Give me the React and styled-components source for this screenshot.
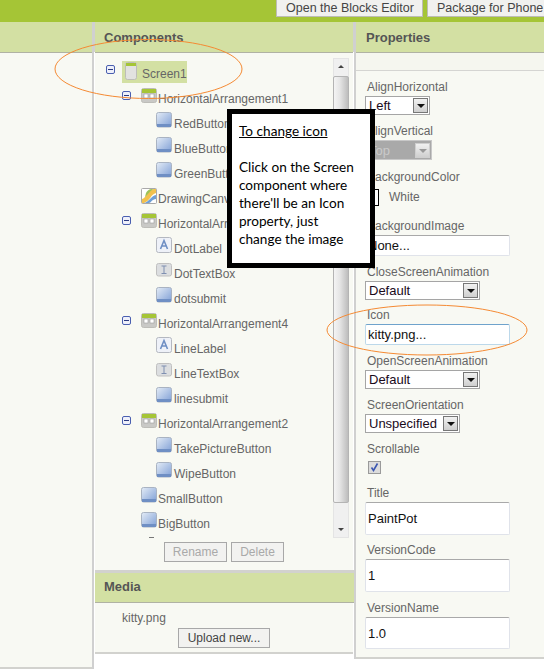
import React from "react";
import styled, { createGlobalStyle } from "styled-components";

const GlobalStyle = createGlobalStyle`
  html, body {
    margin: 0;
    padding: 0;
    background: #fff;
  }
  body {
    font-family: "Liberation Sans", Arial, sans-serif;
    font-size: 12px;
  }
`;

const Page = styled.div`
  position: relative;
  width: 544px;
  height: 671px;
  overflow: hidden;
  background: #fff;
`;

const TopBar = styled.div`
  display: flex;
  justify-content: flex-end;
  gap: 4px;
  height: 22px;
  background: #a5c536;
`;

const TopButton = styled.div`
  box-sizing: border-box;
  width: ${(p) => p.$width}px;
  height: 17px;
  padding-left: 9px;
  background: #f1f1ef;
  border: 1px solid #bdbdb5;
  border-top: 0;
  border-right: ${(p) => (p.$last ? "0" : "1px solid #bdbdb5")};
  color: #444;
  font-size: 12.5px;
  line-height: 16px;
  white-space: nowrap;
  overflow: hidden;
`;

const Columns = styled.div`
  display: flex;
  align-items: flex-start;
`;

const PanelHeader = styled.div`
  box-sizing: border-box;
  height: 31px;
  padding: 8px 0 0 ${(p) => p.$pad || 0}px;
  background: #d3e0a3;
  border-bottom: 1px solid #b0b2a4;
  color: #555;
  font-size: 13px;
  font-weight: bold;
  line-height: 16px;
`;

const ViewerColumn = styled.div`
  box-sizing: border-box;
  width: 92px;
  height: 647px;
  background: #f8f9f3;
  border-bottom: 2px solid #d2d2ce;
`;

const Gutter = styled.div`
  flex: none;
  width: 3px;
  height: 647px;
  background: linear-gradient(#d0d0d0, #d0d0d0) no-repeat 0 0 / 3px 30px,
    linear-gradient(#d0d0d0, #d0d0d0) no-repeat 0 30px / 2px 100%;
`;

const ComponentsColumn = styled.div`
  box-sizing: border-box;
  flex: none;
  width: 258px;
  height: 632px;
  background: #f8f9f3;
  border-bottom: 2px solid #d2d2ce;
`;

const TreeArea = styled.div`
  display: flex;
  height: 486px;
`;

const Tree = styled.div`
  box-sizing: border-box;
  width: 238px;
  height: 486px;
  padding-top: 8px;
  overflow: hidden;
`;

const Row = styled.div`
  display: flex;
  align-items: flex-start;
  height: 25px;
  padding-left: ${(p) => p.$pad}px;
  color: #666;
  line-height: 27px;
  white-space: nowrap;
`;

const Toggle = styled.span`
  flex: none;
  position: relative;
  box-sizing: border-box;
  width: 9px;
  height: 9px;
  margin-top: ${(p) => p.$top}px;
  margin-right: 10px;
  border: 1px solid #4a5fb0;
  border-radius: 2px;
  background: #eef0fa;
  &::after {
    content: "";
    position: absolute;
    left: 1px;
    right: 1px;
    top: 3px;
    height: 1px;
    background: #2b3a80;
  }
`;

const Spacer = styled.span`
  flex: none;
  width: 19px;
`;

const Selected = styled.span`
  display: flex;
  align-items: flex-start;
  box-sizing: border-box;
  width: 65px;
  height: 22px;
  margin-left: -3px;
  padding-left: 3px;
  background: #d3e0a3;
`;

const Label = styled.span`
  margin-left: ${(p) => p.$gap}px;
`;

const IconWrap = styled.svg`
  flex: none;
  display: block;
  margin-top: ${(p) => p.$top}px;
`;

const Clipped = styled.div`
  width: 5px;
  height: 1px;
  margin: 1px 0 0 54px;
  background: #777;
`;

const Scrollbar = styled.div`
  position: relative;
  box-sizing: border-box;
  width: 16px;
  height: 480px;
  margin-top: 5px;
  background: #f0f0f0;
  border: 1px solid #e4e4e4;
`;

const ArrowUp = styled.span`
  position: absolute;
  left: 4px;
  top: 6px;
  border-left: 3px solid transparent;
  border-right: 3px solid transparent;
  border-bottom: 3px solid #444;
`;

const ArrowDown = styled.span`
  position: absolute;
  left: 4px;
  bottom: 6px;
  border-left: 3px solid transparent;
  border-right: 3px solid transparent;
  border-top: 3px solid #444;
`;

const Thumb = styled.span`
  position: absolute;
  left: -1px;
  top: 17px;
  box-sizing: border-box;
  width: 16px;
  height: 427px;
  background: linear-gradient(90deg, #f4f4f4, #e6e6e6 40%, #bdbdbd);
  border: 1px solid #b4b4b4;
  border-radius: 2px;
`;

const ActionRow = styled.div`
  display: flex;
  gap: 4px;
  height: 34px;
  padding: 3px 0 0 69px;
  box-sizing: border-box;
`;

const Action = styled.div`
  box-sizing: border-box;
  width: ${(p) => p.$width}px;
  height: 20px;
  background: #f2f2f0;
  border: 1px solid #a8a8a8;
  color: ${(p) => (p.$disabled ? "#a9a9a9" : "#444")};
  font-size: 12px;
  line-height: 18px;
  text-align: center;
`;

const MediaHeader = styled(PanelHeader)`
  height: 30px;
  padding: 6px 0 0 9px;
  margin: 0 -1px 0 0;
  box-shadow: 0 -3px 0 #d2d2ce;
`;

const MediaBody = styled.div`
  display: flex;
  flex-direction: column;
  padding: 8px 0 0 27px;
  color: #666;
  line-height: 15px;
`;

const UploadRow = styled.div`
  padding: 2px 0 0 56px;
`;

const PropertiesColumn = styled.div`
  flex: 1;
  box-sizing: border-box;
  height: 637px;
  background: #f8f9f3;
  border-bottom: 2px solid #d2d2ce;
`;

const SideGutter = styled(Gutter)`
  height: 637px;
  background: linear-gradient(#d0d0d0, #d0d0d0) no-repeat 0 0 / 3px 30px,
    linear-gradient(#d0d0d0, #d0d0d0) no-repeat 1px 30px / 2px 100%;
`;

const SubBand = styled.div`
  height: 17px;
  background: #f5f6ef;
  border-bottom: 1px solid #d5d5d2;
`;

const PropList = styled.div`
  padding: 9px 0 0 9px;
`;

const Field = styled.div`
  margin-top: ${(p) => p.$gap || 0}px;
`;

const PropLabel = styled.div`
  height: 16px;
  padding-left: 2px;
  color: #666;
  line-height: 15px;
  white-space: nowrap;
`;

const SelectBox = styled.div`
  box-sizing: border-box;
  display: flex;
  align-items: center;
  justify-content: space-between;
  width: ${(p) => p.$width}px;
  height: ${(p) => (p.$disabled ? 20 : 19)}px;
  padding: 0 1px 0 3px;
  background: ${(p) => (p.$disabled ? "#a9a9a9" : "#fff")};
  border: 1px solid ${(p) => (p.$disabled ? "#c8c8c8" : "#a5a5a5")};
  color: ${(p) => (p.$disabled ? "#c9c9c9" : "#1a0a1a")};
  font-size: 13px;
`;

const SelectArrow = styled.span`
  position: relative;
  box-sizing: border-box;
  width: 15px;
  height: 15px;
  background: linear-gradient(#f1f1f1, #cfcfcf);
  border: 1px solid ${(p) => (p.$disabled ? "#cfcfcf" : "#777")};
  &::after {
    content: "";
    position: absolute;
    left: 3px;
    top: 5px;
    border-left: 4px solid transparent;
    border-right: 4px solid transparent;
    border-top: 4px solid ${(p) => (p.$disabled ? "#999" : "#111")};
  }
`;

const TextBox = styled.input`
  display: block;
  box-sizing: border-box;
  width: 145px;
  height: ${(p) => p.$height}px;
  padding: 0 2px;
  margin: 0;
  font-family: "Liberation Sans", Arial, sans-serif;
  font-size: 13px;
  color: #111;
  background: #fff;
  outline: none;
  border: 1px solid ${(p) => (p.$focus ? "#bcd8ea" : "#e0e3ea")};
  border-top-color: ${(p) => (p.$focus ? "#6fa3cc" : "#a9a9a9")};
  border-radius: 2px;
`;

const ColorRow = styled.div`
  display: flex;
  align-items: center;
  height: 22px;
  padding-left: 2px;
  color: #666;
`;

const Swatch = styled.span`
  box-sizing: border-box;
  width: 12px;
  height: 17px;
  margin-right: 10px;
  background: #fff;
  border: 1px solid #000;
`;

const Check = styled.span`
  display: block;
  box-sizing: border-box;
  width: 13px;
  height: 13px;
  margin: 3px 0 0 3px;
  background: #dcdcdc;
  border: 1px solid #9a9a9a;
`;

const Callout = styled.div`
  position: absolute;
  left: 227px;
  top: 109px;
  box-sizing: border-box;
  width: 148px;
  height: 159px;
  padding: 8px 0 0 7px;
  background: #fff;
  border: 5px solid #000;
  color: #000;
  font-family: Lato, "Open Sans", sans-serif;
  font-size: 13.6px;
  line-height: 18px;
`;

const CalloutTitle = styled.div`
  text-decoration: underline;
  margin-bottom: 18px;
`;

const Rings = styled.svg`
  position: absolute;
  left: 0;
  top: 0;
  pointer-events: none;
`;

const ScreenIcon = () => (
  <IconWrap $top={1} width="13" height="19" viewBox="0 0 13 19">
    <rect x="0.5" y="0.5" width="11" height="17" rx="2" fill="#e2e2e0" stroke="#bdbdb8" />
    <rect x="1" y="1" width="10" height="3" fill="#a5c536" />
  </IconWrap>
);

const ArrangementIcon = () => (
  <IconWrap $top={2} width="16" height="16" viewBox="0 0 16 16">
    <rect x="0.5" y="0.5" width="15" height="14" rx="2" fill="#c9c9c6" stroke="#bdbdb8" />
    <rect x="1" y="1" width="14" height="4" fill="#a5c536" />
    <rect x="3" y="6" width="4" height="4" fill="#fff" stroke="#9a9a9a" strokeWidth="0.6" />
    <rect x="9" y="6" width="4" height="4" fill="#fff" stroke="#9a9a9a" strokeWidth="0.6" />
  </IconWrap>
);

const ButtonIcon = () => (
  <IconWrap $top={1} width="16" height="16" viewBox="0 0 16 16">
    <defs>
      <linearGradient id="btn" x1="0" y1="0" x2="1" y2="1">
        <stop offset="0" stopColor="#e4ecf6" />
        <stop offset="1" stopColor="#7f9fd6" />
      </linearGradient>
    </defs>
    <rect x="0.5" y="0.5" width="15" height="14.5" rx="2" fill="url(#btn)" stroke="#a9b3c2" />
    <rect x="1" y="12" width="14" height="3" fill="#6f8fc4" />
  </IconWrap>
);

const LabelIcon = () => (
  <IconWrap $top={1} width="16" height="16" viewBox="0 0 16 16">
    <rect x="0.5" y="0.5" width="15" height="15" rx="2" fill="#eef1f8" stroke="#b4b8c0" />
    <path d="M4.5 12 L8 3.5 L11.5 12 M6 9 H10" fill="none" stroke="#6f8fc4" strokeWidth="1.6" />
  </IconWrap>
);

const TextBoxIcon = () => (
  <IconWrap $top={2} width="16" height="14" viewBox="0 0 16 14">
    <rect x="0.5" y="0.5" width="15" height="12.5" rx="2" fill="#dcdee0" stroke="#c0c0c0" />
    <path d="M5.5 3 H10.5 M8 3 V10.5 M5.5 10.5 H10.5" fill="none" stroke="#7f8fb0" strokeWidth="1" />
  </IconWrap>
);

const CanvasIcon = () => (
  <IconWrap $top={2} width="16" height="16" viewBox="0 0 16 16">
    <rect x="0.5" y="0.5" width="15" height="15" rx="1" fill="#fff" stroke="#a9a9a9" />
    <path d="M1 11 C5 11 6 2 13 1 H15 V5 C10 6 9 13 3 15 H1 Z" fill="#f2c14e" />
    <path d="M3 15 C8 14 10 8 15 7 V11 C11 11 10 15 8 15 Z" fill="#6f9fd6" />
    <path d="M5 5 C6 3 8 1 11 1 H13 C9 2 7 7 4 9 Z" fill="#9cc25a" />
  </IconWrap>
);

const icons = {
  arrangement: ArrangementIcon,
  button: ButtonIcon,
  label: LabelIcon,
  textbox: TextBoxIcon,
  canvas: CanvasIcon,
};

const rows = [
  { name: "HorizontalArrangement1", icon: "arrangement", depth: 1, toggle: true },
  { name: "RedButton", icon: "button", depth: 2 },
  { name: "BlueButton", icon: "button", depth: 2 },
  { name: "GreenButton", icon: "button", depth: 2 },
  { name: "DrawingCanvas", icon: "canvas", depth: 1 },
  { name: "HorizontalArrangement3", icon: "arrangement", depth: 1, toggle: true },
  { name: "DotLabel", icon: "label", depth: 2 },
  { name: "DotTextBox", icon: "textbox", depth: 2 },
  { name: "dotsubmit", icon: "button", depth: 2 },
  { name: "HorizontalArrangement4", icon: "arrangement", depth: 1, toggle: true },
  { name: "LineLabel", icon: "label", depth: 2 },
  { name: "LineTextBox", icon: "textbox", depth: 2 },
  { name: "linesubmit", icon: "button", depth: 2 },
  { name: "HorizontalArrangement2", icon: "arrangement", depth: 1, toggle: true },
  { name: "TakePictureButton", icon: "button", depth: 2 },
  { name: "WipeButton", icon: "button", depth: 2 },
  { name: "SmallButton", icon: "button", depth: 1 },
  { name: "BigButton", icon: "button", depth: 1 },
];

const padFor = { 0: 11, 1: 27, 2: 42 };

const Select = ({ value, width, disabled }) => (
  <SelectBox $width={width} $disabled={disabled}>
    <span>{value}</span>
    <SelectArrow $disabled={disabled} />
  </SelectBox>
);

const App = () => {
  return (
    <Page>
      <GlobalStyle />
      <TopBar>
        <TopButton $width={147}>Open the Blocks Editor</TopButton>
        <TopButton $width={117} $last>Package for Phone</TopButton>
      </TopBar>
      <Columns>
        <ViewerColumn>
          <PanelHeader />
        </ViewerColumn>
        <Gutter />
        <ComponentsColumn>
          <PanelHeader $pad={9}>Components</PanelHeader>
          <TreeArea>
            <Tree>
              <Row $pad={padFor[0]}>
                <Toggle $top={4} />
                <Selected>
                  <ScreenIcon />
                  <Label $gap={4}>Screen1</Label>
                </Selected>
              </Row>
              {rows.map((row) => {
                const RowIcon = icons[row.icon];
                return (
                  <Row key={row.name} $pad={padFor[row.depth]}>
                    {row.toggle ? <Toggle $top={5} /> : <Spacer />}
                    <RowIcon />
                    <Label $gap={row.depth === 2 ? 2 : 1}>{row.name}</Label>
                  </Row>
                );
              })}
              <Clipped />
            </Tree>
            <Scrollbar>
              <ArrowUp />
              <Thumb />
              <ArrowDown />
            </Scrollbar>
          </TreeArea>
          <ActionRow>
            <Action $width={63} $disabled>Rename</Action>
            <Action $width={53} $disabled>Delete</Action>
          </ActionRow>
          <MediaHeader>Media</MediaHeader>
          <MediaBody>
            <span>kitty.png</span>
            <UploadRow>
              <Action $width={92}>Upload new...</Action>
            </UploadRow>
          </MediaBody>
        </ComponentsColumn>
        <SideGutter />
        <PropertiesColumn>
          <PanelHeader $pad={10}>Properties</PanelHeader>
          <SubBand />
          <PropList>
            <Field>
              <PropLabel>AlignHorizontal</PropLabel>
              <Select value="Left" width={65} />
            </Field>
            <Field $gap={9}>
              <PropLabel>AlignVertical</PropLabel>
              <Select value="Top" width={67} disabled />
            </Field>
            <Field $gap={10}>
              <PropLabel>BackgroundColor</PropLabel>
              <ColorRow>
                <Swatch />
                White
              </ColorRow>
            </Field>
            <Field $gap={11}>
              <PropLabel>BackgroundImage</PropLabel>
              <TextBox $height={21} readOnly value="None..." />
            </Field>
            <Field $gap={9}>
              <PropLabel>CloseScreenAnimation</PropLabel>
              <Select value="Default" width={115} />
            </Field>
            <Field $gap={8}>
              <PropLabel>Icon</PropLabel>
              <TextBox $height={21} $focus readOnly value="kitty.png..." />
            </Field>
            <Field $gap={9}>
              <PropLabel>OpenScreenAnimation</PropLabel>
              <Select value="Default" width={115} />
            </Field>
            <Field $gap={9}>
              <PropLabel>ScreenOrientation</PropLabel>
              <Select value="Unspecified" width={95} />
            </Field>
            <Field $gap={9}>
              <PropLabel>Scrollable</PropLabel>
              <Check>
                <svg width="11" height="11" viewBox="0 0 11 11">
                  <path d="M2.5 5.5 L4.5 8.5 L8.5 1.5" fill="none" stroke="#3a55b0" strokeWidth="1.6" />
                </svg>
              </Check>
            </Field>
            <Field $gap={12}>
              <PropLabel>Title</PropLabel>
              <TextBox $height={33} readOnly value="PaintPot" />
            </Field>
            <Field $gap={8}>
              <PropLabel>VersionCode</PropLabel>
              <TextBox $height={33} readOnly value="1" />
            </Field>
            <Field $gap={9}>
              <PropLabel>VersionName</PropLabel>
              <TextBox $height={32} readOnly value="1.0" />
            </Field>
          </PropList>
        </PropertiesColumn>
      </Columns>
      <Callout>
        <CalloutTitle>To change icon</CalloutTitle>
        Click on the Screen
        <br />
        component where
        <br />
        there'll be an Icon
        <br />
        property, just
        <br />
        change the image
      </Callout>
      <Rings width="544" height="671" viewBox="0 0 544 671">
        <ellipse cx="148.5" cy="69" rx="93.5" ry="29.5" fill="none" stroke="#f58a33" strokeWidth="1" />
        <ellipse cx="427" cy="330" rx="100" ry="25" fill="none" stroke="#f58a33" strokeWidth="1" />
      </Rings>
    </Page>
  );
};

export default App;
